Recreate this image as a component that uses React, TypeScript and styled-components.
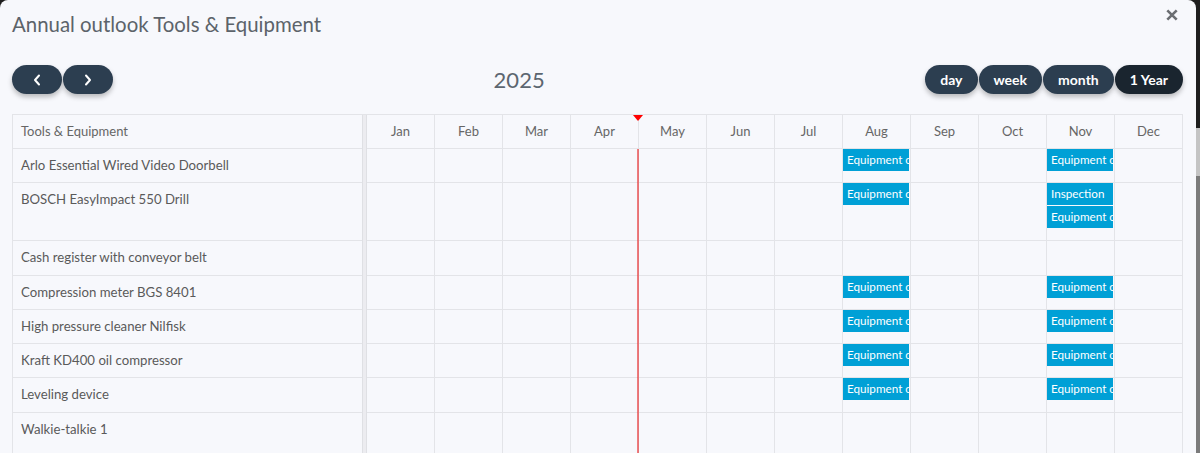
import React from 'react';
import styled, { createGlobalStyle } from 'styled-components';

const GlobalStyle = createGlobalStyle`
  html, body {
    margin: 0;
    height: 100%;
    overflow: hidden;
  }
  body {
    font-family: Lato, "Open Sans", sans-serif;
    background: linear-gradient(
      to bottom,
      #1e1e1e 0,
      #1e1e1e 128px,
      #c4c4c4 128px,
      #c4c4c4 176px,
      #7b7b7b 176px
    );
  }
  * {
    box-sizing: border-box;
  }
`;

const MONTHS = ['Jan', 'Feb', 'Mar', 'Apr', 'May', 'Jun', 'Jul', 'Aug', 'Sep', 'Oct', 'Nov', 'Dec'];
const MONTH_WIDTH = 68;
const ROW_HEIGHT = 34.3;

type Booking = { month: number; title: string };
type Resource = { name: string; events: Booking[] };

const check = (month: number): Booking => ({ month, title: 'Equipment check' });

const resources: Resource[] = [
  { name: 'Arlo Essential Wired Video Doorbell', events: [check(7), check(10)] },
  {
    name: 'BOSCH EasyImpact 550 Drill',
    events: [check(7), { month: 10, title: 'Inspection' }, check(10)],
  },
  { name: 'Cash register with conveyor belt', events: [] },
  { name: 'Compression meter BGS 8401', events: [check(7), check(10)] },
  { name: 'High pressure cleaner Nilfisk', events: [check(7), check(10)] },
  { name: 'Kraft KD400 oil compressor', events: [check(7), check(10)] },
  { name: 'Leveling device', events: [check(7), check(10)] },
  { name: 'Walkie-talkie 1', events: [] },
];

// how many events stack up in the busiest month of a row
const lanesOf = (r: Resource) =>
  Math.max(0, ...MONTHS.map((_, m) => r.events.filter((e) => e.month === m).length));

const rowHeight = (lanes: number) => (lanes > 1 ? 12 + lanes * 23 : ROW_HEIGHT);

const Modal = styled.div`
  width: 1196px;
  height: 100vh;
  background: #f7f8fc;
  border-radius: 8px 8px 0 0;
  padding: 8px 13px 0 12px;
  display: flex;
  flex-direction: column;
`;

const ModalHeader = styled.div`
  display: flex;
  justify-content: space-between;
  align-items: flex-start;
  height: 32px;
  flex: none;
`;

const Title = styled.h2`
  margin: 0;
  font-size: 20.4px;
  line-height: 32px;
  font-weight: 400;
  color: #5c636a;
`;

const CloseButton = styled.button`
  border: none;
  background: none;
  padding: 0;
  margin: 1px 5px 0 0;
  width: 12px;
  height: 12px;
  display: flex;
  cursor: pointer;
`;

const Toolbar = styled.div`
  display: flex;
  justify-content: space-between;
  align-items: center;
  margin-top: 25px;
  flex: none;
`;

const ButtonGroup = styled.div`
  display: flex;
  gap: 1px;
`;

const PillButton = styled.button<{ $active?: boolean; $wide?: boolean }>`
  height: 29px;
  min-width: ${(p) => (p.$wide ? '50px' : 'auto')};
  padding: 0 15px;
  border: none;
  border-radius: 15px;
  background: ${(p) => (p.$active ? '#1a252f' : '#2c3e50')};
  color: #fff;
  font-family: Lato, sans-serif;
  font-size: 14px;
  font-weight: 700;
  display: flex;
  align-items: center;
  justify-content: center;
  box-shadow: 0 3px 5px rgba(0, 0, 0, 0.25);
  cursor: pointer;
`;

const Year = styled.h3`
  margin: 0;
  font-size: 22px;
  font-weight: 400;
  color: #5c6670;
`;

// fills the rest of the modal; the page cuts it at the bottom
const Scheduler = styled.div`
  margin-top: 20px;
  flex: 1;
  min-height: 0;
  display: flex;
  border-top: 1px solid #e3e4e8;
  border-left: 1px solid #e3e4e8;
`;

const ResourcePane = styled.div`
  width: 349px;
  flex: none;
  display: flex;
  flex-direction: column;
`;

const Divider = styled.div`
  width: 5px;
  flex: none;
  background: #ececf0;
  border-left: 1px solid #dfe0e4;
  border-right: 1px solid #dfe0e4;
`;

const TimelinePane = styled.div`
  position: relative;
  width: ${MONTH_WIDTH * 12}px;
  flex: none;
  display: flex;
  flex-direction: column;
`;

const HeaderCell = styled.div`
  height: 34px;
  flex: none;
  padding: 7px 8px;
  line-height: 18px;
  font-size: 13px;
  color: #666;
  border-bottom: 1px solid #e3e4e8;
`;

const ResourceRow = styled.div<{ $lanes: number; $fill?: boolean }>`
  height: ${(p) => rowHeight(p.$lanes)}px;
  flex: ${(p) => (p.$fill ? '1' : 'none')};
  padding: 7px 8px;
  line-height: 18px;
  font-size: 13.2px;
  color: #5a5a5a;
  border-bottom: ${(p) => (p.$fill ? 'none' : '1px solid #e3e4e8')};
  white-space: nowrap;
`;

const MonthGrid = styled.div<{ $lanes?: number; $header?: boolean; $fill?: boolean }>`
  display: grid;
  grid-template-columns: repeat(12, 1fr);
  height: ${(p) => (p.$header ? 34 : rowHeight(p.$lanes ?? 0))}px;
  flex: ${(p) => (p.$fill ? '1' : 'none')};
  border-bottom: ${(p) => (p.$fill ? 'none' : '1px solid #e3e4e8')};
`;

const MonthLabel = styled.div`
  border-right: 1px solid #e3e4e8;
  text-align: center;
  font-size: 13px;
  line-height: 18px;
  padding-top: 7px;
  color: #666;
`;

const MonthCell = styled.div`
  border-right: 1px solid #e3e4e8;
  display: flex;
  flex-direction: column;
  gap: 1px;
  padding: 0 1px 0 0;
  min-width: 0;
`;

const EventChip = styled.div`
  height: 22px;
  background: #00a0d6;
  color: #fff;
  font-size: 11.7px;
  line-height: 21px;
  padding: 0 2px 0 4px;
  white-space: nowrap;
  overflow: hidden;
`;

const NowArrow = styled.div<{ $left: number }>`
  position: absolute;
  top: 0;
  left: ${(p) => p.$left - 4}px;
  width: 0;
  height: 0;
  border-left: 5px solid transparent;
  border-right: 5px solid transparent;
  border-top: 6px solid #ff0000;
  z-index: 2;
`;

const NowLine = styled.div<{ $left: number }>`
  position: absolute;
  top: 34px;
  bottom: 0;
  left: ${(p) => p.$left}px;
  width: 2px;
  background-color: rgba(232, 40, 40, 0.6);
  z-index: 2;
`;

const ChevronIcon = ({ dir }: { dir: 'left' | 'right' }) => (
  <svg width="8" height="12" viewBox="0 0 8 12" fill="none">
    <path
      d={dir === 'left' ? 'M6 1.5 L2 6 L6 10.5' : 'M2 1.5 L6 6 L2 10.5'}
      stroke="#fff"
      strokeWidth="2"
      strokeLinecap="round"
      strokeLinejoin="round"
    />
  </svg>
);

// position of "today" (end of April) on the year axis
const nowLeft = Math.round((3 + 29.5 / 30) * MONTH_WIDTH) - 1;

export default function App() {
  const last = resources.length - 1;
  return (
    <>
      <GlobalStyle />
      <Modal>
        <ModalHeader>
          <Title>Annual outlook Tools &amp; Equipment</Title>
          <CloseButton aria-label="Close">
            <svg width="12" height="12" viewBox="0 0 12 12">
              <path d="M1.3 1.3 L10.7 10.7 M10.7 1.3 L1.3 10.7" stroke="#6b6e72" strokeWidth="2.6" />
            </svg>
          </CloseButton>
        </ModalHeader>

        <Toolbar>
          <ButtonGroup>
            <PillButton $wide aria-label="prev">
              <ChevronIcon dir="left" />
            </PillButton>
            <PillButton $wide aria-label="next">
              <ChevronIcon dir="right" />
            </PillButton>
          </ButtonGroup>
          <Year>2025</Year>
          <ButtonGroup>
            <PillButton>day</PillButton>
            <PillButton>week</PillButton>
            <PillButton>month</PillButton>
            <PillButton $active>1 Year</PillButton>
          </ButtonGroup>
        </Toolbar>

        <Scheduler>
          <ResourcePane>
            <HeaderCell>Tools &amp; Equipment</HeaderCell>
            {resources.map((r, idx) => (
              <ResourceRow key={r.name} $lanes={lanesOf(r)} $fill={idx === last}>
                {r.name}
              </ResourceRow>
            ))}
          </ResourcePane>
          <Divider />
          <TimelinePane>
            <MonthGrid $header>
              {MONTHS.map((m) => (
                <MonthLabel key={m}>{m}</MonthLabel>
              ))}
            </MonthGrid>
            {resources.map((r, idx) => (
              <MonthGrid key={r.name} $lanes={lanesOf(r)} $fill={idx === last}>
                {MONTHS.map((m, i) => (
                  <MonthCell key={m}>
                    {r.events
                      .filter((e) => e.month === i)
                      .map((e, k) => (
                        <EventChip key={k}>{e.title}</EventChip>
                      ))}
                  </MonthCell>
                ))}
              </MonthGrid>
            ))}
            <NowArrow $left={nowLeft} />
            <NowLine $left={nowLeft} />
          </TimelinePane>
        </Scheduler>
      </Modal>
    </>
  );
}
